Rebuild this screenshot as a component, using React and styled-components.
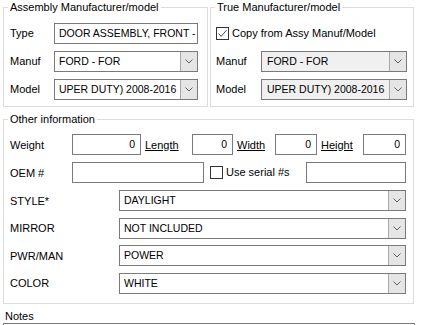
import React from "react";
import styled, { createGlobalStyle } from "styled-components";

const GlobalStyle = createGlobalStyle`
  body {
    margin: 0;
    background: #ffffff;
    font-family: "Liberation Sans", Arial, sans-serif;
    font-size: 11px;
    color: #000000;
  }
`;

const Page = styled.div`
  box-sizing: border-box;
  width: 431px;
  height: 325px;
  overflow: hidden;
  padding: 1px 0 0 3px;
`;

const TopRow = styled.div`
  display: flex;
  gap: 2px;
`;

const Group = styled.fieldset`
  margin: ${(p) => p.$mt || 0}px 0 0 0;
  padding: 0;
  border: 1px solid #dcdcdc;
  box-sizing: border-box;
  min-width: 0;
  width: ${(p) => p.$w}px;
  height: ${(p) => p.$h}px;
`;

const Legend = styled.legend`
  margin-left: 4px;
  padding: 0 2px;
  line-height: 13px;
  font-size: 11px;
`;

const Inner = styled.div`
  padding: ${(p) => p.$pad};
  display: flex;
  flex-direction: column;
  gap: ${(p) => p.$gap}px;
`;

const FormGrid = styled.div`
  display: grid;
  grid-template-columns: ${(p) => p.$label}px ${(p) => p.$field}px;
  grid-auto-rows: 21px;
  row-gap: 7px;
  align-items: center;
`;

const Label = styled.span`
  line-height: 13px;
  white-space: nowrap;
`;

const TextBox = styled.div`
  box-sizing: border-box;
  width: ${(p) => p.$w}px;
  height: 21px;
  margin: ${(p) => p.$m || "0"};
  border: 1px solid #7a7a7a;
  background: #ffffff;
  padding: 0 ${(p) => (p.$right ? 5 : 4)}px;
  font-size: 10.5px;
  line-height: 19px;
  white-space: nowrap;
  overflow: hidden;
  text-align: ${(p) => (p.$right ? "right" : "left")};
`;

const ComboBox = styled.div`
  box-sizing: border-box;
  display: flex;
  width: ${(p) => p.$w}px;
  height: 21px;
  border: 1px solid #7a7a7a;
  background: ${(p) => (p.$disabled ? "#f0f0f0" : "#ffffff")};
`;

const ComboText = styled.span`
  flex: 1;
  padding-left: ${(p) => (p.$disabled ? 5 : 4)}px;
  font-size: 10.5px;
  line-height: 19px;
  white-space: nowrap;
  overflow: hidden;
`;

const DropButton = styled.span`
  width: 16px;
  flex: none;
  display: flex;
  align-items: center;
  justify-content: center;
  background: #e5e5e5;
  border-left: 1px solid #a8a8a8;
`;

const CheckRow = styled.label`
  display: flex;
  align-items: center;
  gap: 3px;
  height: 13px;
  line-height: 13px;
  margin: ${(p) => p.$m || "0"};
  white-space: nowrap;
`;

const Box = styled.span`
  box-sizing: border-box;
  width: 13px;
  height: 13px;
  flex: none;
  border: 1px solid #333333;
  background: #ffffff;
  display: flex;
  align-items: center;
  justify-content: center;
`;

const FieldRow = styled.div`
  display: flex;
  align-items: center;
  height: 21px;
`;

const RowLabel = styled.span`
  width: ${(p) => p.$w}px;
  flex: none;
  white-space: nowrap;
`;

const LinkLabel = styled.span`
  width: ${(p) => p.$w}px;
  flex: none;
  margin-left: 4px;
  text-decoration: underline;
  white-space: nowrap;
`;

const AttrList = styled.div`
  display: flex;
  flex-direction: column;
  gap: 6.5px;
`;

const NotesLabel = styled.div`
  margin: 6px 0 0 2px;
  line-height: 13px;
`;

const NotesBox = styled.div`
  box-sizing: border-box;
  width: 412px;
  height: 40px;
  border: 1px solid #7a7a7a;
  background: #ffffff;
`;

const Chevron = () => (
  <svg width="8" height="5" viewBox="0 0 8 5">
    <path d="M0.5 0.5 L4 4 L7.5 0.5" fill="none" stroke="#606060" strokeWidth="1" />
  </svg>
);

const Tick = () => (
  <svg width="11" height="11" viewBox="0 0 11 11">
    <path d="M1.5 5.5 L4.2 8.3 L9.5 2.2" fill="none" stroke="#444" strokeWidth="1" />
  </svg>
);

const Combo = ({ w, value, disabled }) => (
  <ComboBox $w={w} $disabled={disabled}>
    <ComboText $disabled={disabled}>{value}</ComboText>
    <DropButton>
      <Chevron />
    </DropButton>
  </ComboBox>
);

const Check = ({ checked, children, m }) => (
  <CheckRow $m={m}>
    <Box>{checked && <Tick />}</Box>
    {children}
  </CheckRow>
);

const attributes = [
  ["STYLE*", "DAYLIGHT"],
  ["MIRROR", "NOT INCLUDED"],
  ["PWR/MAN", "POWER"],
  ["COLOR", "WHITE"],
];

export default function App() {
  return (
    <Page>
      <GlobalStyle />
      <TopRow>
        <Group $w={205} $h={106}>
          <Legend>Assembly Manufacturer/model</Legend>
          <Inner $pad="9px 0 0 6px" $gap={0}>
            <FormGrid $label={44} $field={144}>
              <Label>Type</Label>
              <TextBox $w={144}>DOOR ASSEMBLY, FRONT -</TextBox>
              <Label>Manuf</Label>
              <Combo w={144} value="FORD - FOR" />
              <Label>Model</Label>
              <Combo w={144} value="UPER DUTY) 2008-2016" />
            </FormGrid>
          </Inner>
        </Group>
        <Group $w={204} $h={106}>
          <Legend>True Manufacturer/model</Legend>
          <Inner $pad="0 0 0 5px" $gap={0}>
            <Check checked m="13px 0 11px 0">
              Copy from Assy Manuf/Model
            </Check>
            <FormGrid $label={45} $field={146}>
              <Label>Manuf</Label>
              <Combo w={146} value="FORD - FOR" disabled />
              <Label>Model</Label>
              <Combo w={146} value="UPER DUTY) 2008-2016" disabled />
            </FormGrid>
          </Inner>
        </Group>
      </TopRow>
      <Group $w={411} $h={191} $mt={6}>
        <Legend>Other information</Legend>
        <Inner $pad="8px 0 0 6px" $gap={7}>
          <FieldRow>
            <RowLabel $w={62}>Weight</RowLabel>
            <TextBox $w={69} $right>0</TextBox>
            <LinkLabel $w={47}>Length</LinkLabel>
            <TextBox $w={41} $right>0</TextBox>
            <LinkLabel $w={38}>Width</LinkLabel>
            <TextBox $w={42} $right>0</TextBox>
            <LinkLabel $w={42}>Height</LinkLabel>
            <TextBox $w={43} $right>0</TextBox>
          </FieldRow>
          <FieldRow>
            <RowLabel $w={62}>OEM #</RowLabel>
            <TextBox $w={132} />
            <Check m="0 0 0 6px">Use serial #s</Check>
            <TextBox $w={100} $m="0 7px 0 auto" />
          </FieldRow>
          <AttrList>
            {attributes.map(([label, value]) => (
              <FieldRow key={label}>
                <RowLabel $w={109}>{label}</RowLabel>
                <Combo w={287} value={value} />
              </FieldRow>
            ))}
          </AttrList>
        </Inner>
      </Group>
      <NotesLabel>Notes</NotesLabel>
      <NotesBox />
    </Page>
  );
}
